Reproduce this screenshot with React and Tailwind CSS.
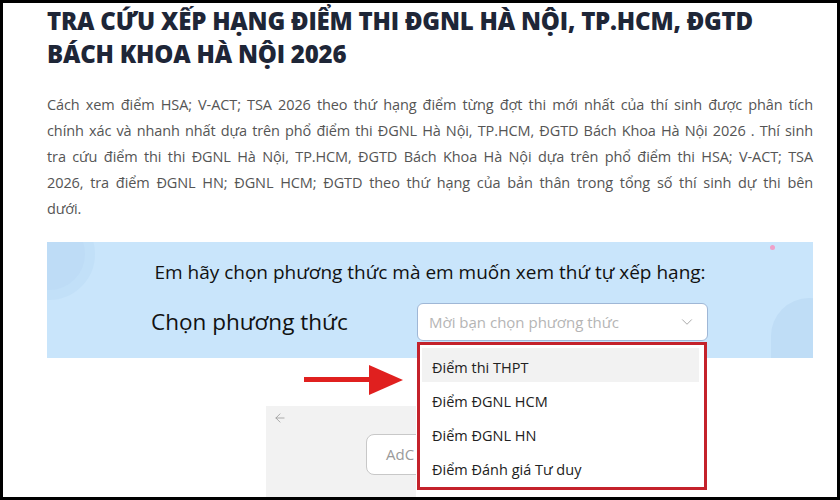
import { ChevronDown, ArrowLeft } from "lucide-react";

const options = [
  "Điểm thi THPT",
  "Điểm ĐGNL HCM",
  "Điểm ĐGNL HN",
  "Điểm Đánh giá Tư duy",
];

const introLines = [
  "Cách xem điểm HSA; V-ACT; TSA 2026 theo thứ hạng điểm từng đợt thi mới nhất của thí sinh được phân tích",
  "chính xác và nhanh nhất dựa trên phổ điểm thi ĐGNL Hà Nội, TP.HCM, ĐGTD Bách Khoa Hà Nội 2026 . Thí sinh",
  "tra cứu điểm thi thi ĐGNL Hà Nội, TP.HCM, ĐGTD Bách Khoa Hà Nội dựa trên phổ điểm thi HSA; V-ACT; TSA",
  "2026, tra điểm ĐGNL HN; ĐGNL HCM; ĐGTD theo thứ hạng của bản thân trong tổng số thí sinh dự thi bên",
];

// mũi tên đỏ chú thích
const RedArrow = () => (
  <svg width="104" height="32" viewBox="0 0 104 32" className="absolute left-[298px] top-[360px]">
    <rect x="3" y="14" width="72" height="5" fill="#e0201f" />
    <polygon points="68,2 102,17 68,32" fill="#e0201f" />
  </svg>
);

export default function App() {
  return (
    <div
      className="relative w-[840px] h-[500px] overflow-hidden border-[3px] border-black bg-white"
      style={{ fontFamily: '"Open Sans", "Noto Sans", sans-serif' }}
    >
      <div className="pl-[44px] pr-[24px] pt-px">
        <h1 className="text-[24px] leading-[33px] font-extrabold text-[#1e2637] tracking-[-0.2px]">
          TRA CỨU XẾP HẠNG ĐIỂM THI ĐGNL HÀ NỘI, TP.HCM, ĐGTD
          <br />
          BÁCH KHOA HÀ NỘI 2026
        </h1>

        <div className="mt-[22px] text-[14.5px] leading-[26px] tracking-[-0.1px] text-[#555]">
          {introLines.map((l) => (
            <p key={l} className="whitespace-nowrap text-justify [text-align-last:justify]">
              {l}
            </p>
          ))}
          <p>dưới.</p>
        </div>

        {/* khung chọn phương thức */}
        <div className="relative mt-[20px] h-[116px] overflow-hidden bg-[#c9e5fb]">
          <div className="absolute -left-[44px] -top-[34px] w-[92px] h-[92px] rounded-full border-[10px] border-[#c2e0f8] bg-[#bedcf6]" />
          <div className="absolute -right-[34px] top-[56px] w-[76px] h-[96px] rounded-full bg-[#bfddf6]" />
          <div className="absolute right-[38px] top-[3px] w-[5px] h-[5px] rounded-full bg-[#f0a0c8]" />
          <div className="relative text-center pt-[17px] text-[19px] leading-[26px] font-medium text-[#111]">
            Em hãy chọn phương thức mà em muốn xem thứ tự xếp hạng:
          </div>
          <div className="relative flex items-center mt-[18px] pl-[104px]">
            <span className="text-[22.5px] leading-[30px] font-medium text-[#111] w-[266px]">Chọn phương thức</span>
            <div className="flex items-center justify-between w-[291px] h-[38px] px-[11px] rounded-[6px] bg-white border border-[#9fb7d6]">
              <span className="text-[15px] text-[#b5b5b5]">Mời bạn chọn phương thức</span>
              <ChevronDown size={18} strokeWidth={1.3} className="text-[#a8a8a8]" />
            </div>
          </div>
        </div>

        {/* khung bên dưới */}
        <div className="ml-[219px] mt-[48px] w-[150px] h-[95px] overflow-hidden bg-[#f2f2f2] pt-[5px] pl-[7px]">
          <ArrowLeft size={14} strokeWidth={1.4} className="text-[#9a9a9a]" />
          <div className="ml-[93px] mt-[9px] w-[110px] h-[41px] rounded-[8px] border border-[#c8c8c8] bg-white flex items-center pl-[19px] text-[15px] text-[#9a9a9a] whitespace-nowrap">
            AdC
          </div>
        </div>
      </div>

      <RedArrow />

      {/* danh sách thả xuống */}
      <div className="absolute left-[414px] top-[339px] w-[290px] h-[148px] border-[3px] border-[#c4222b] bg-white pt-[3px] pl-[2px] pr-[5px]">
        {options.map((o, i) => (
          <div
            key={o}
            className={`h-[34px] flex items-center pt-[5px] pl-[10px] text-[14.5px] text-[#222] ${i === 0 ? "bg-[#f2f2f2]" : ""}`}
          >
            {o}
          </div>
        ))}
      </div>
    </div>
  );
}
